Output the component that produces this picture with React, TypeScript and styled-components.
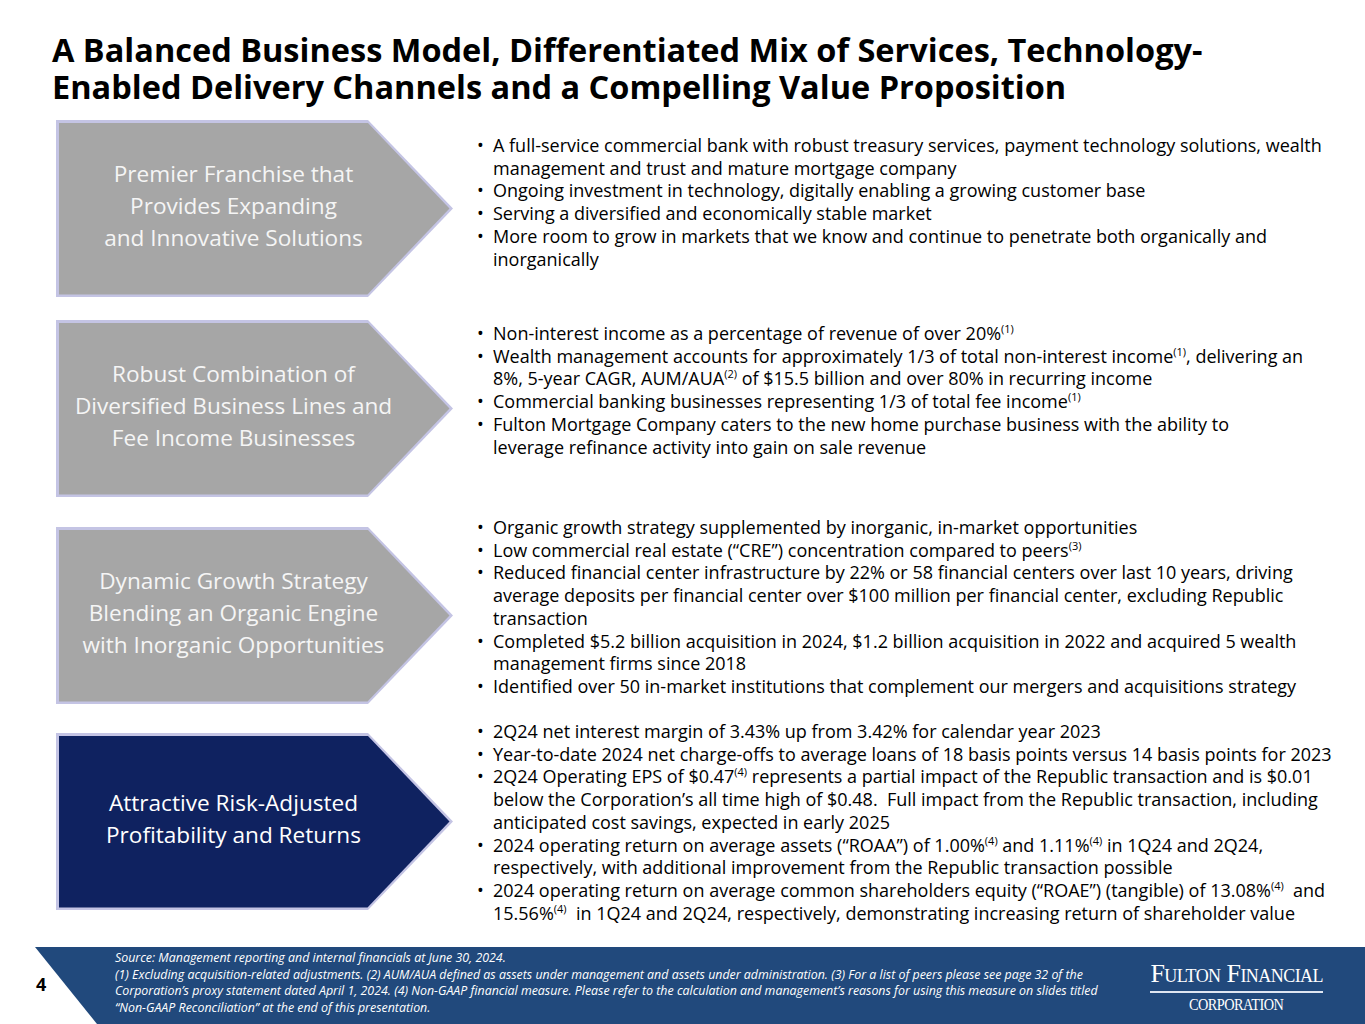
import React from "react";
import styled, { createGlobalStyle } from "styled-components";

const GlobalStyle = createGlobalStyle`
    html, body {
        margin: 0;
        padding: 0;
        background: #ffffff;
    }
    body {
        font-family: "Open Sans", "Noto Sans", sans-serif;
        color: #000000;
    }
`;

const SlideStyles = styled.div`
    width: 1365px;
    height: 1024px;
    display: flex;
    flex-direction: column;
    overflow: hidden;
`;

const TitleStyles = styled.h1`
    margin: 31px 0 0 52px;
    font-size: 32.5px;
    line-height: 37px;
    font-weight: 700;
    color: #000000;
`;

const MainStyles = styled.main`
    flex: 1;
    display: flex;
    flex-direction: column;
    padding-top: 13px;
`;

const RowStyles = styled.section<{ $height: number }>`
    height: ${(p) => p.$height}px;
    flex: none;
    display: grid;
    grid-template-columns: 397px 1fr;
    column-gap: 22px;
    align-items: start;
    padding-left: 56px;
`;

const ArrowStyles = styled.div<{ $top: number }>`
    margin-top: ${(p) => p.$top}px;
    height: 172px;
    padding: 2.5px;
    background: #c4c4e4;
    clip-path: polygon(0 0, 312px 0, 100% 50%, 312px 100%, 0 100%);
    display: flex;
`;

const ArrowFillStyles = styled.div<{ $dark?: boolean }>`
    flex: 1;
    background: ${(p) => (p.$dark ? "#0f2260" : "#a6a6a6")};
    color: ${(p) => (p.$dark ? "#ffffff" : "#f5f5f5")};
    clip-path: polygon(0 0, 309px 0, calc(100% - 1px) 50%, 309px 100%, 0 100%);
    display: flex;
    align-items: center;
    justify-content: center;
    padding: 0 42px 6px 0;
    text-align: center;
    font-size: 22.6px;
    line-height: 32px;
    white-space: nowrap;
`;

const BulletListStyles = styled.ul<{ $top: number }>`
    margin: ${(p) => p.$top}px 0 0 0;
    padding: 0;
    list-style: none;
    font-size: 18px;
    line-height: 22.7px;
    white-space: nowrap;
`;

const BulletStyles = styled.li`
    display: grid;
    grid-template-columns: 18px 1fr;

    &::before {
        content: "•";
        padding-left: 2px;
    }
`;

const SupStyles = styled.sup`
    font-size: 11px;
    line-height: 0;
    vertical-align: 7px;
`;

const FooterStyles = styled.footer`
    height: 77px;
    flex: none;
    display: flex;
`;

const PageNumberStyles = styled.div`
    width: 60px;
    flex: none;
    padding-left: 36px;
    box-sizing: border-box;
    display: flex;
    align-items: center;
    font-family: "Open Sans", "Liberation Sans", sans-serif;
    font-weight: 700;
    font-size: 18px;
    padding-bottom: 4px;
`;

const BandStyles = styled.div`
    flex: 1;
    margin-left: -25px;
    background: #21497c;
    clip-path: polygon(0 0, 100% 0, 100% 100%, 62px 100%);
    display: flex;
    align-items: flex-start;
    justify-content: space-between;
    padding: 3px 42px 0 80px;
`;

const FootnoteStyles = styled.p`
    margin: 0;
    color: #ffffff;
    font-style: italic;
    font-size: 12.4px;
    line-height: 16.7px;
    white-space: nowrap;
`;

const LogoStyles = styled.div`
    margin-top: 12px;
    display: flex;
    flex-direction: column;
    align-items: center;
    color: #ffffff;
    font-family: "Liberation Serif", "Times New Roman", serif;
`;

const LogoNameStyles = styled.div`
    font-size: 26px;
    line-height: 24px;
    font-variant: small-caps;
    letter-spacing: -0.55px;
    padding-bottom: 5px;
    border-bottom: 2px solid #dfe6f2;
`;

const LogoSubStyles = styled.div`
    font-size: 17px;
    line-height: 20px;
    letter-spacing: -0.6px;
    transform: scaleX(0.84);
    padding-top: 2px;
`;

interface Row {
    label: React.ReactNode;
    dark?: boolean;
    height: number;
    arrowTop: number;
    textTop: number;
    bullets: React.ReactNode[];
}

const rows: Row[] = [
    {
        label: (
            <>
                Premier Franchise that
                <br />
                Provides Expanding
                <br />
                and Innovative Solutions
            </>
        ),
        height: 200,
        arrowTop: 2,
        textTop: 16,
        bullets: [
            <>
                A full-service commercial bank with robust treasury services, payment technology solutions, wealth
                <br />
                management and trust and mature mortgage company
            </>,
            <>Ongoing investment in technology, digitally enabling a growing customer base</>,
            <>Serving a diversified and economically stable market</>,
            <>
                More room to grow in markets that we know and continue to penetrate both organically and
                <br />
                inorganically
            </>,
        ],
    },
    {
        label: (
            <>
                Robust Combination of
                <br />
                Diversified Business Lines and
                <br />
                Fee Income Businesses
            </>
        ),
        height: 196,
        arrowTop: 2,
        textTop: 4,
        bullets: [
            <>
                Non-interest income as a percentage of revenue of over 20%<SupStyles>(1)</SupStyles>
            </>,
            <>
                Wealth management accounts for approximately 1/3 of total non-interest income
                <SupStyles>(1)</SupStyles>, delivering an
                <br />
                8%, 5-year CAGR, AUM/AUA<SupStyles>(2)</SupStyles> of $15.5 billion and over 80% in recurring income
            </>,
            <>
                Commercial banking businesses representing 1/3 of total fee income<SupStyles>(1)</SupStyles>
            </>,
            <>
                Fulton Mortgage Company caters to the new home purchase business with the ability to
                <br />
                leverage refinance activity into gain on sale revenue
            </>,
        ],
    },
    {
        label: (
            <>
                Dynamic Growth Strategy
                <br />
                Blending an Organic Engine
                <br />
                with Inorganic Opportunities
            </>
        ),
        height: 204,
        arrowTop: 13,
        textTop: 2,
        bullets: [
            <>Organic growth strategy supplemented by inorganic, in-market opportunities</>,
            <>
                Low commercial real estate (“CRE”) concentration compared to peers<SupStyles>(3)</SupStyles>
            </>,
            <>
                Reduced financial center infrastructure by 22% or 58 financial centers over last 10 years, driving
                <br />
                average deposits per financial center over $100 million per financial center, excluding Republic
                <br />
                transaction
            </>,
            <>
                Completed $5.2 billion acquisition in 2024, $1.2 billion acquisition in 2022 and acquired 5 wealth
                <br />
                management firms since 2018
            </>,
            <>Identified over 50 in-market institutions that complement our mergers and acquisitions strategy</>,
        ],
    },
    {
        label: (
            <>
                Attractive Risk-Adjusted
                <br />
                Profitability and Returns
            </>
        ),
        dark: true,
        height: 229,
        arrowTop: 15,
        textTop: 2,
        bullets: [
            <>2Q24 net interest margin of 3.43% up from 3.42% for calendar year 2023</>,
            <>Year-to-date 2024 net charge-offs to average loans of 18 basis points versus 14 basis points for 2023</>,
            <>
                2Q24 Operating EPS of $0.47<SupStyles>(4)</SupStyles> represents a partial impact of the Republic
                transaction and is $0.01
                <br />
                below the Corporation’s all time high of $0.48.&nbsp; Full impact from the Republic transaction,
                including
                <br />
                anticipated cost savings, expected in early 2025
            </>,
            <>
                2024 operating return on average assets (“ROAA”) of 1.00%<SupStyles>(4)</SupStyles> and 1.11%
                <SupStyles>(4)</SupStyles> in 1Q24 and 2Q24,
                <br />
                respectively, with additional improvement from the Republic transaction possible
            </>,
            <>
                2024 operating return on average common shareholders equity (“ROAE”) (tangible) of 13.08%
                <SupStyles>(4)</SupStyles>&nbsp; and
                <br />
                15.56%<SupStyles>(4)</SupStyles>&nbsp; in 1Q24 and 2Q24, respectively, demonstrating increasing
                return of shareholder value
            </>,
        ],
    },
];

export default function App(): React.ReactElement {
    return (
        <SlideStyles>
            <GlobalStyle />
            <TitleStyles>
                A Balanced Business Model, Differentiated Mix of Services, Technology-
                <br />
                Enabled Delivery Channels and a Compelling Value Proposition
            </TitleStyles>
            <MainStyles>
                {rows.map((row, i) => (
                    <RowStyles key={i} $height={row.height}>
                        <ArrowStyles $top={row.arrowTop}>
                            <ArrowFillStyles $dark={row.dark}>
                                <div>{row.label}</div>
                            </ArrowFillStyles>
                        </ArrowStyles>
                        <BulletListStyles $top={row.textTop}>
                            {row.bullets.map((b, j) => (
                                <BulletStyles key={j}>
                                    <span>{b}</span>
                                </BulletStyles>
                            ))}
                        </BulletListStyles>
                    </RowStyles>
                ))}
            </MainStyles>
            <FooterStyles>
                <PageNumberStyles>4</PageNumberStyles>
                <BandStyles>
                    <FootnoteStyles>
                        Source: Management reporting and internal financials at June 30, 2024.
                        <br />
                        (1) Excluding acquisition-related adjustments. (2) AUM/AUA defined as assets under management
                        and assets under administration. (3) For a list of peers please see page 32 of the
                        <br />
                        Corporation’s proxy statement dated April 1, 2024. (4) Non-GAAP financial measure. Please
                        refer to the calculation and management’s reasons for using this measure on slides titled
                        <br />
                        “Non-GAAP Reconciliation” at the end of this presentation.
                    </FootnoteStyles>
                    <LogoStyles>
                        <LogoNameStyles>Fulton Financial</LogoNameStyles>
                        <LogoSubStyles>CORPORATION</LogoSubStyles>
                    </LogoStyles>
                </BandStyles>
            </FooterStyles>
        </SlideStyles>
    );
}
